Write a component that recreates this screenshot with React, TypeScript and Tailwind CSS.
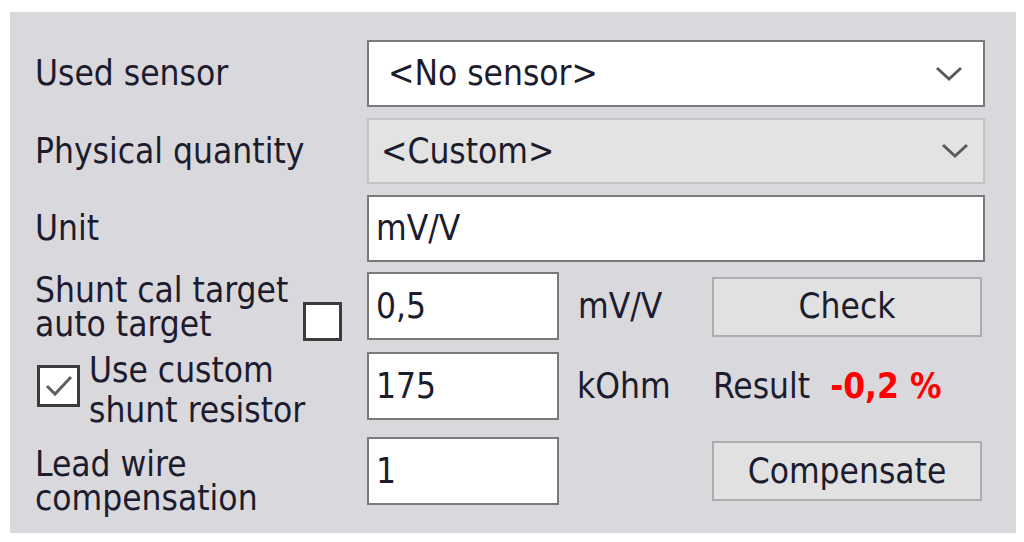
const fontStack = '"DejaVu Sans Condensed", "DejaVu Sans", Tahoma, sans-serif'

const rowCols = 'grid grid-cols-[332px_192px_153px_273px]'

function Chevron() {
  return (
    <svg width="28" height="16" viewBox="0 0 28 16" className="shrink-0">
      <polyline points="2,2 14,13 26,2" fill="none" stroke="#5a5a5a" strokeWidth="3" />
    </svg>
  )
}

function Select({ value, disabled }: { value: string; disabled?: boolean }) {
  return (
    <div
      className={
        disabled
          ? 'col-span-3 flex h-[66px] items-center justify-between border-2 border-[#c4c4c4] bg-[#e3e3e3] pl-[12px] pr-[14px]'
          : 'col-span-3 flex h-[67px] items-center justify-between border-2 border-[#7a7a7a] bg-white pl-[19px] pr-[20px]'
      }
    >
      <span>{value}</span>
      <Chevron />
    </div>
  )
}

function TextBox({ value, wide }: { value: string; wide?: boolean }) {
  return (
    <div
      className={
        (wide ? 'col-span-3 h-[67px] ' : 'h-[68px] ') +
        'flex items-center border-2 border-[#7a7a7a] bg-white pl-[7px]'
      }
    >
      {value}
    </div>
  )
}

function Button({ label }: { label: string }) {
  return (
    <div className="flex h-[60px] w-[270px] items-center justify-center border-2 border-[#adadad] bg-[#e1e1e1]">
      {label}
    </div>
  )
}

export default function App() {
  return (
    <div className="h-[542px] w-[1024px] bg-white pl-[10px] pt-[12px]" style={{ fontFamily: fontStack }}>
      <div className="h-[521px] w-[1006px] bg-[#d9d8dc] pl-[25px] pt-[28px] text-[35px] text-[#1c1c2e]">
        <div className={rowCols}>
          <div className="flex items-center">Used sensor</div>
          <Select value="<No sensor>" />
        </div>

        <div className={rowCols + ' mt-[11px]'}>
          <div className="flex items-center">Physical quantity</div>
          <Select value="<Custom>" disabled />
        </div>

        <div className={rowCols + ' mt-[11px]'}>
          <div className="flex items-center">Unit</div>
          <TextBox value="mV/V" wide />
        </div>

        <div className={rowCols + ' mt-[10px] h-[68px]'}>
          <div className="flex items-center justify-between pr-[25px]">
            <div className="leading-[34px]">
              <div>Shunt cal target</div>
              <div>auto target</div>
            </div>
            <div className="mt-[30px] h-[39px] w-[39px] border-[3px] border-[#3c3c3c] bg-white" />
          </div>
          <TextBox value="0,5" />
          <div className="flex items-center pl-[19px]">mV/V</div>
          <div className="flex items-center">
            <Button label="Check" />
          </div>
        </div>

        <div className={rowCols + ' mt-[12px] h-[68px]'}>
          <div className="flex h-[68px] items-center gap-[9px] pl-[2px]">
            <div className="flex h-[42px] w-[43px] shrink-0 items-center justify-center border-[3px] border-[#3c3c3c] bg-white">
              <svg width="30" height="24" viewBox="0 0 30 24">
                <polyline points="3,12 11,20 27,3" fill="none" stroke="#5f5f5f" strokeWidth="3" />
              </svg>
            </div>
            <div className="mt-[8px] leading-[40px]">
              <div>Use custom</div>
              <div>shunt resistor</div>
            </div>
          </div>
          <TextBox value="175" />
          <div className="flex items-center pl-[18px]">kOhm</div>
          <div className="flex items-center gap-[20px] pl-[1px]">
            <span>Result</span>
            <span className="font-bold text-[#ff0000]">-0,2 %</span>
          </div>
        </div>

        <div className={rowCols + ' mt-[17px] h-[68px]'}>
          <div className="flex h-[68px] items-center pt-[20px] leading-[34px]">
            <div>
              <div>Lead wire</div>
              <div>compensation</div>
            </div>
          </div>
          <TextBox value="1" />
          <div />
          <div className="flex h-[68px] items-center">
            <Button label="Compensate" />
          </div>
        </div>
      </div>
    </div>
  )
}
